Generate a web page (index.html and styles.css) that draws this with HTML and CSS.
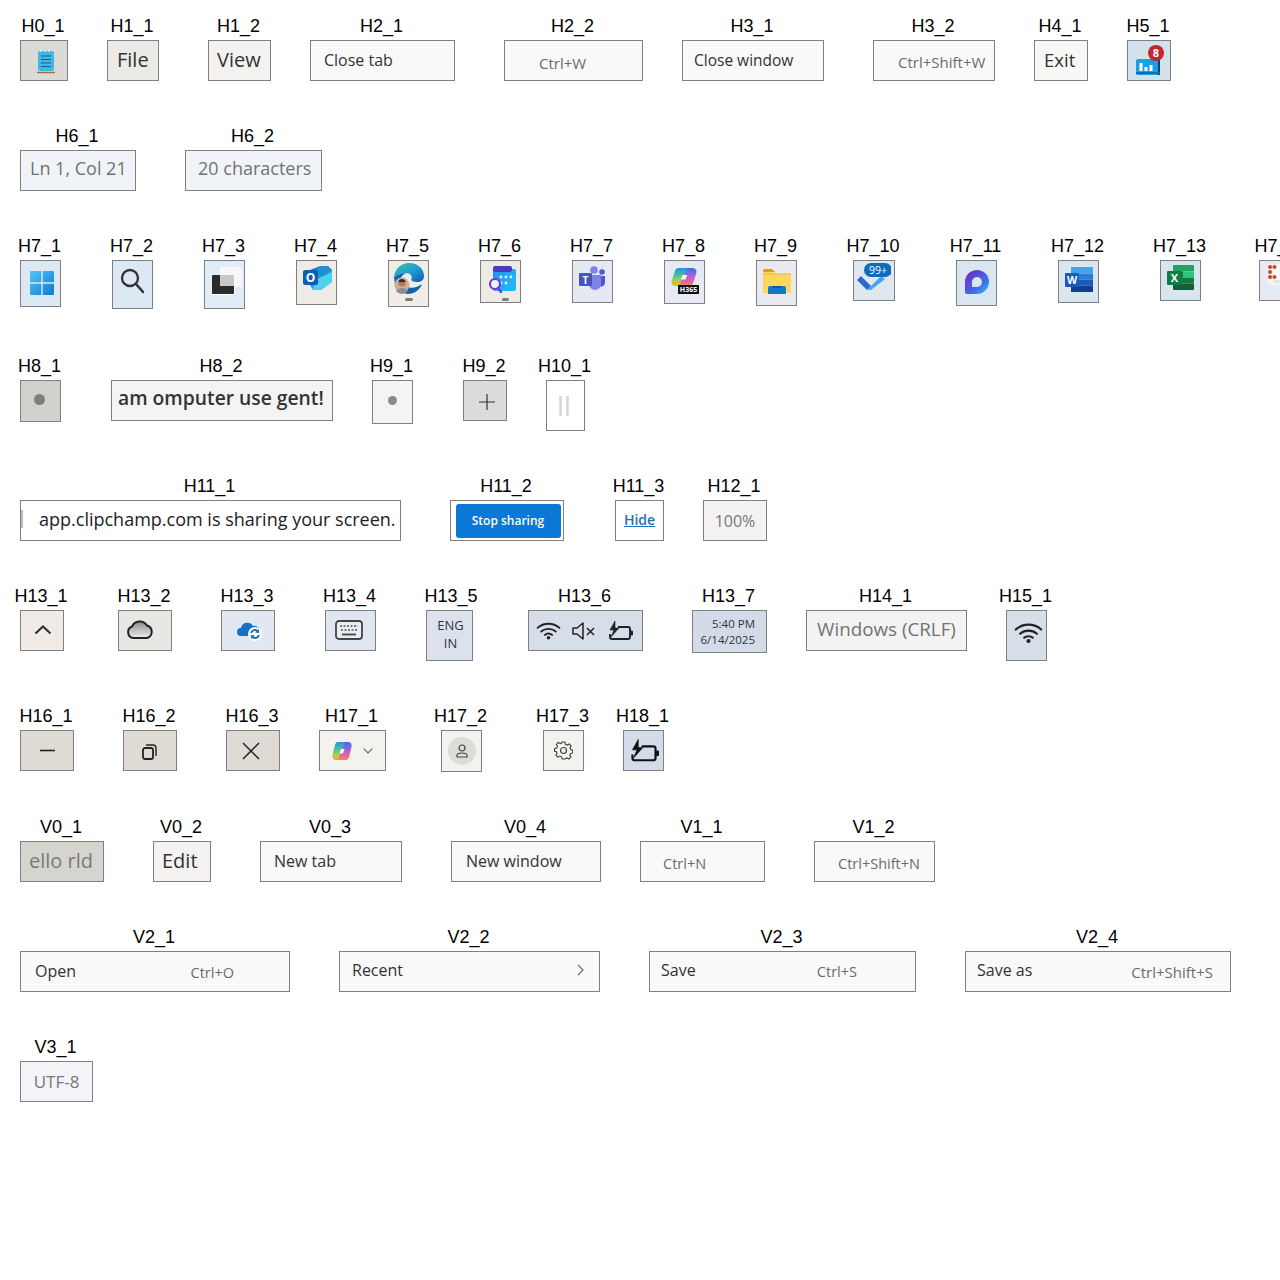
FILE: index.html
```html
<!DOCTYPE html>
<html lang="en">
<head>
<meta charset="utf-8">
<title>UI element crops</title>
<link rel="stylesheet" href="styles.css">
</head>
<body>
<svg class="defs" width="0" height="0" aria-hidden="true">
  <defs>
    <linearGradient id="gWin" x1="0" y1="0" x2="1" y2="1"><stop offset="0" stop-color="#52c8f6"/><stop offset="1" stop-color="#0a78d8"/></linearGradient>
    <linearGradient id="gOut" x1="0" y1="0" x2="1" y2="1"><stop offset="0" stop-color="#0f6cbd"/><stop offset="1" stop-color="#3fd0f0"/></linearGradient>
    <linearGradient id="gEdge" x1="0" y1="0" x2="1" y2="1"><stop offset="0" stop-color="#37c6a0"/><stop offset=".55" stop-color="#1d9ad6"/><stop offset="1" stop-color="#0c59a4"/></linearGradient>
    <linearGradient id="gCal" x1="0" y1="0" x2="1" y2="1"><stop offset="0" stop-color="#2b8cf0"/><stop offset="1" stop-color="#1cc0fa"/></linearGradient>
    <linearGradient id="gCopL" x1="0" y1="0" x2="0" y2="1"><stop offset="0" stop-color="#2d8fe0"/><stop offset=".4" stop-color="#48c0a0"/><stop offset=".7" stop-color="#a8d050"/><stop offset="1" stop-color="#f0b030"/></linearGradient>
    <linearGradient id="gCopR" x1="0" y1="0" x2="0" y2="1"><stop offset="0" stop-color="#3a6fe0"/><stop offset=".4" stop-color="#a060e0"/><stop offset=".75" stop-color="#f060a0"/><stop offset="1" stop-color="#f09040"/></linearGradient>
    <linearGradient id="gLoop" x1="0" y1="0" x2="1" y2="1"><stop offset="0" stop-color="#7a1fc4"/><stop offset=".65" stop-color="#3d6fe8"/><stop offset="1" stop-color="#36c8f0"/></linearGradient>
    <linearGradient id="gCloud" x1="0" y1="0" x2="0" y2="1"><stop offset="0" stop-color="#8a8a8a"/><stop offset="1" stop-color="#eeeeee"/></linearGradient>
    <symbol id="wifi" viewBox="0 0 24 18"><g fill="none" stroke="currentColor" stroke-width="1.800" stroke-linecap="round"><path d="M1.500 6.500C7.500 1.200 16.500 1.200 22.500 6.500"/><path d="M5 10C9 6.600 15 6.600 19 10"/><path d="M8.500 13.300c2-1.600 5-1.600 7 0"/></g><circle cx="12" cy="16" r="1.700" fill="currentColor"/></symbol>
    <symbol id="batt" viewBox="0 0 26 20"><path d="M11 6h10a2 2 0 0 1 2 2v8a2 2 0 0 1-2 2H5a2 2 0 0 1-2-2v-3" fill="none" stroke="currentColor" stroke-width="1.900" stroke-linejoin="round"/><rect x="23.500" y="9.500" width="2.500" height="5" rx="1" fill="currentColor"/><path d="M8 0 3 9h4l-3 7 8-9H8z" fill="currentColor" stroke="currentColor" stroke-width=".6"/></symbol>
    <symbol id="cop" viewBox="0 0 20 20" preserveAspectRatio="none"><path d="M6 1h7c1 0 1.500.5 1 1.500L8 19H4c-3 0-4-2.500-3.500-5L3 4C3.500 2 4.500 1 6 1z" fill="url(#gCopL)"/><path d="M14 19H7.500c-1 0-1.500-.5-1-1.500L13 1h3c3 0 4 2.500 3.500 5L17 16c-.5 2-1.500 3-3 3z" fill="url(#gCopR)"/><path d="M9 8h3.500L11 12.500H7.500z" fill="#fff"/></symbol>
  </defs>
</svg>

<div class="row">
  <div class="item h0-1"><div class="lbl">H0_1</div><div class="box">
    <svg class="ic" width="18" height="24" viewBox="0 0 18 24"><rect x="1" y="1" width="16" height="20" rx="2" fill="#3fb8e6"/><path d="M3 1h2M7 1h2M11 1h2" stroke="#fff" stroke-width="1"/><path d="M4 6h10M4 9.500h10M4 13h10M4 16.500h10" stroke="#14618f" stroke-width="1.100"/><path d="M0 22.500h18" stroke="#a56a38" stroke-width="1.500"/></svg>
  </div></div>
  <div class="item m39 h1-1"><div class="lbl">H1_1</div><div class="box t-big">File</div></div>
  <div class="item m49 h1-2"><div class="lbl">H1_2</div><div class="box t-big">View</div></div>
  <div class="item m39 h2-1"><div class="lbl">H2_1</div><div class="box t-menu">Close tab</div></div>
  <div class="item m49 h2-2"><div class="lbl">H2_2</div><div class="box t-key t-key-lg">Ctrl+W</div></div>
  <div class="item m39 h3-1"><div class="lbl">H3_1</div><div class="box t-menu">Close window</div></div>
  <div class="item m49 h3-2"><div class="lbl">H3_2</div><div class="box t-key t-key-lg">Ctrl+Shift+W</div></div>
  <div class="item m39 h4-1"><div class="lbl">H4_1</div><div class="box t-big">Exit</div></div>
  <div class="item m39 h5-1"><div class="lbl">H5_1</div><div class="box">
    <svg class="ic" width="34" height="32" viewBox="0 0 34 32"><rect x="4" y="15" width="24" height="16" rx="2" fill="#1a9fe2"/><rect x="26" y="15" width="2" height="16" fill="#0b3f78"/><path d="M9 19v8M14 23v4M19 21v6" stroke="#fff" stroke-width="3"/><path d="M4 29h24" stroke="#0d6db8" stroke-width="2"/><circle cx="24" cy="9" r="8" fill="#c4262e"/><text class="svgt bold" x="24" y="13" font-size="11" fill="#fff" text-anchor="middle">8</text></svg>
  </div></div>
</div>

<div class="row">
  <div class="item h6-1"><div class="lbl">H6_1</div><div class="box t-status">Ln 1, Col 21</div></div>
  <div class="item m49 h6-2"><div class="lbl">H6_2</div><div class="box t-status">20 characters</div></div>
</div>

<div class="row row-tall">
  <div class="item h7-1"><div class="lbl">H7_1</div><div class="box">
    <svg class="ic" width="24" height="24" viewBox="0 0 24 24"><path d="M0 1a1 1 0 0 1 1-1h10.300v11.300H0zM12.700 0H23a1 1 0 0 1 1 1v10.300H12.700zM0 12.700h11.300V24H1a1 1 0 0 1-1-1zM12.700 12.700H24V23a1 1 0 0 1-1 1H12.700z" fill="url(#gWin)"/></svg>
  </div></div>
  <div class="item m51 h7-2"><div class="lbl">H7_2</div><div class="box">
    <svg class="ic" width="24" height="26" viewBox="0 0 24 26"><circle cx="10" cy="10" r="8" fill="none" stroke="#333" stroke-width="2.300"/><path d="m16 16 7 8" stroke="#333" stroke-width="2.600" stroke-linecap="round"/></svg>
  </div></div>
  <div class="item m51 h7-3"><div class="lbl">H7_3</div><div class="box">
    <svg class="ic" width="32" height="30" viewBox="0 0 32 30"><rect x="9" y="1" width="22" height="20" rx="1" fill="#f6f8fb"/><rect x="1" y="9" width="23" height="20" rx="1" fill="#fff"/><rect x="1" y="9" width="22" height="19" rx="1" fill="#2b2b2b"/><rect x="9" y="9" width="14" height="11" fill="#c8c8c8"/></svg>
  </div></div>
  <div class="item m51 h7-4"><div class="lbl">H7_4</div><div class="box">
    <svg class="ic" width="30" height="26" viewBox="0 0 30 26"><path d="M7 5 17 1h8l4 4v12l-11 8H10l-3-5z" fill="url(#gOut)"/><path d="M17 1h8l4 4-9 7-8-5z" fill="#1f90d8"/><path d="M12 15 29 7v10l-11 8H10z" fill="#4fd2ee"/><rect x="0" y="5" width="15" height="15" rx="2" fill="#0a5fb4"/><text class="svgt bold" x="7.500" y="17" font-size="12" fill="#fff" text-anchor="middle">O</text></svg>
  </div></div>
  <div class="item m51 h7-5"><div class="lbl">H7_5</div><div class="box">
    <svg class="ic" width="32" height="40" viewBox="0 0 32 40"><path d="M1 15C2 6 9 1 16 1c9 0 15 6 15 13 0 4-3 6-7 6-3 0-5-1-6-2 2-3 0-7-5-7-6 0-10 3-12 4z" fill="url(#gEdge)"/><path d="M13 24c4 3 11 2 16-2-2 6-8 10-14 10-2 0-4-1-5-2z" fill="#0f66b0"/><path d="M1 15c2-1 6-4 12-4-4 2-6 5-6 8v4H2z" fill="#1266b0"/><circle cx="9" cy="23" r="7.500" fill="#c9b09c"/><circle cx="9" cy="21" r="3.600" fill="#b07a58"/><path d="M5.500 20c0-4 7-4 7 0" fill="#3a2a20"/><path d="M3 29c2-4 10-4 12 0a7.500 7.500 0 0 1-12 0z" fill="#8c8c90"/><rect x="12" y="36" width="8" height="3" rx="1.500" fill="#7d7d7d"/></svg>
  </div></div>
  <div class="item m51 h7-6"><div class="lbl">H7_6</div><div class="box">
    <svg class="ic" width="28" height="36" viewBox="0 0 28 36"><rect x="5" y="4" width="23" height="22" rx="2" fill="url(#gCal)"/><rect x="5" y="1" width="19" height="6" rx="2" fill="#4a3bb8"/><g fill="#dff3ff"><circle cx="13" cy="12" r="1.400"/><circle cx="18" cy="12" r="1.400"/><circle cx="23" cy="12" r="1.400"/><circle cx="13" cy="18" r="1.400"/><circle cx="18" cy="18" r="1.400"/></g><circle cx="7" cy="19" r="5" fill="#eaf4ff" stroke="#6d3cc8" stroke-width="2.200"/><path d="m10 23 3 4" stroke="#6d3cc8" stroke-width="2.400" stroke-linecap="round"/><rect x="14" y="33" width="7" height="3" rx="1.500" fill="#7d7d7d"/></svg>
  </div></div>
  <div class="item m51 h7-7"><div class="lbl">H7_7</div><div class="box">
    <svg class="ic" width="27" height="24" viewBox="0 0 27 24"><circle cx="15" cy="4" r="3.800" fill="#7b83eb"/><circle cx="23" cy="6" r="2.800" fill="#5059c9"/><path d="M19 10h7v7a4 4 0 0 1-6 3z" fill="#5059c9"/><path d="M8 9h14v9a6 6 0 0 1-12 0z" fill="#7b83eb"/><rect x="0" y="7" width="13" height="13" rx="1" fill="#4b53bc"/><text class="svgt bold" x="6.500" y="17.500" font-size="10" fill="#fff" text-anchor="middle">T</text></svg>
  </div></div>
  <div class="item m51 h7-8"><div class="lbl">H7_8</div><div class="box">
    <svg class="ic" width="28" height="27" viewBox="0 0 28 27"><use href="#cop" x="0" y="0" width="26" height="20"/><rect x="7" y="18" width="21" height="9" fill="#111"/><text class="svgt bold" x="17.500" y="25" font-size="7" fill="#fff" text-anchor="middle">H365</text></svg>
  </div></div>
  <div class="item m51 h7-9"><div class="lbl">H7_9</div><div class="box">
    <svg class="ic" width="28" height="25" viewBox="0 0 28 25"><path d="M0 2a2 2 0 0 1 2-2h7l3 3h-12z" fill="#d69f1e"/><path d="M1 3h10l2 2h14a1 1 0 0 1 1 1v18H0V4z" fill="#ffd65c"/><path d="M0 5h28" stroke="#e8b93c" stroke-width="1"/><path d="M5 25v-6a2 2 0 0 1 2-2h14a2 2 0 0 1 2 2v6z" fill="#0f78c8"/><path d="M10 18h8" stroke="#07457e" stroke-width="1.200"/></svg>
  </div></div>
  <div class="item m56 h7-10"><div class="lbl">H7_10</div><div class="box">
    <svg class="ic" width="38" height="32" viewBox="0 0 38 32"><path d="m4 18 10 10 4-4-10-10z" fill="#2a68d0"/><path d="M14 28 28 14l4 3-14 11z" fill="#46a4ee"/><rect x="11" y="1" width="28" height="14" rx="7" fill="#0f6cbd"/><text class="svgt" x="25" y="12" font-size="10.500" fill="#fff" text-anchor="middle">99+</text></svg>
  </div></div>
  <div class="item m61 h7-11"><div class="lbl">H7_11</div><div class="box">
    <svg class="ic" width="24" height="24" viewBox="0 0 24 24"><path fill-rule="evenodd" d="M12 0a12 12 0 0 1 0 24H2a2 2 0 0 1-2-2V12A12 12 0 0 1 12 0zm0 7a5 5 0 0 0-5 5v5h5a5 5 0 0 0 0-10z" fill="url(#gLoop)"/></svg>
  </div></div>
  <div class="item m61 h7-12"><div class="lbl">H7_12</div><div class="box">
    <svg class="ic" width="28" height="25" viewBox="0 0 28 25"><rect x="6" y="0" width="22" height="6.500" fill="#41a5ee"/><rect x="6" y="6.500" width="22" height="6" fill="#2b7cd3"/><rect x="6" y="12.500" width="22" height="6" fill="#185abd"/><rect x="6" y="18.500" width="22" height="6.500" fill="#103f91"/><rect x="0" y="6" width="14" height="14" rx="1" fill="#185abd"/><text class="svgt bold" x="7" y="17" font-size="10.500" fill="#fff" text-anchor="middle">W</text></svg>
  </div></div>
  <div class="item m61 h7-13"><div class="lbl">H7_13</div><div class="box">
    <svg class="ic" width="27" height="25" viewBox="0 0 27 25"><rect x="6" y="0" width="21" height="6.500" rx="1" fill="#21a366"/><rect x="6" y="6.500" width="21" height="6" fill="#33c481"/><rect x="6" y="6.500" width="10" height="6" fill="#107c41"/><rect x="6" y="12.500" width="21" height="6" fill="#107c41"/><rect x="6" y="18.500" width="21" height="6.500" rx="1" fill="#185c37"/><rect x="0" y="6" width="15" height="14" rx="1" fill="#107c41"/><text class="svgt bold" x="7.500" y="17" font-size="11" fill="#fff" text-anchor="middle">X</text></svg>
  </div></div>
  <div class="item m58 h7-14"><div class="lbl lbl-right">H7_14</div><div class="box">
    <svg class="ic" width="30" height="26" viewBox="0 0 30 26"><rect x="0" y="0" width="30" height="21" rx="3" fill="#f7f3f0"/><rect x="6" y="5" width="22" height="14" rx="2" fill="#e4e4e4"/><rect x="6" y="5" width="22" height="11" fill="#fafafa"/><g fill="#c8492a"><circle cx="3" cy="3" r="2"/><circle cx="7.500" cy="3" r="2"/><circle cx="3" cy="8" r="2"/><circle cx="3" cy="13" r="2"/><circle cx="7.500" cy="13" r="2"/></g></svg>
  </div></div>
</div>

<div class="row">
  <div class="item h8-1"><div class="lbl">H8_1</div><div class="box"><span class="dot dot-lg"></span></div></div>
  <div class="item m50 h8-2"><div class="lbl">H8_2</div><div class="box t-strong">am omputer use gent!</div></div>
  <div class="item m39 h9-1"><div class="lbl">H9_1</div><div class="box"><span class="dot"></span></div></div>
  <div class="item m50 h9-2"><div class="lbl">H9_2</div><div class="box">
    <svg class="ic" width="16" height="16" viewBox="0 0 16 16"><path d="M8 0v16M0 8h16" stroke="#333" stroke-width="1.200"/></svg>
  </div></div>
  <div class="item m39 h10-1"><div class="lbl">H10_1</div><div class="box">
    <svg class="ic" width="10" height="20" viewBox="0 0 10 20"><path d="M1.500 0v20M8.500 0v20" stroke="#d4d4d4" stroke-width="2.400"/></svg>
  </div></div>
</div>

<div class="row">
  <div class="item h11-1"><div class="lbl">H11_1</div><div class="box t-share"><span class="edge-mark"></span>app.clipchamp.com is sharing your screen.</div></div>
  <div class="item m49 h11-2"><div class="lbl">H11_2</div><div class="box"><span class="stop">Stop sharing</span></div></div>
  <div class="item m51 h11-3"><div class="lbl">H11_3</div><div class="box"><span class="hide">Hide</span></div></div>
  <div class="item m39 h12-1"><div class="lbl">H12_1</div><div class="box t-zoom">100%</div></div>
</div>

<div class="row">
  <div class="item h13-1"><div class="lbl">H13_1</div><div class="box">
    <svg class="ic" width="18" height="11" viewBox="0 0 18 11"><path d="m1.500 9.500 7.500-7 7.500 7" fill="none" stroke="#333" stroke-width="2.200"/></svg>
  </div></div>
  <div class="item m54 h13-2"><div class="lbl">H13_2</div><div class="box">
    <svg class="ic" width="28" height="20" viewBox="0 0 28 20"><path d="M7 19a6 6 0 0 1-1-11.500A8.500 8.500 0 0 1 21 6.500 6.500 6.500 0 0 1 21 19z" fill="url(#gCloud)" stroke="#222" stroke-width="2"/></svg>
  </div></div>
  <div class="item m49 h13-3"><div class="lbl">H13_3</div><div class="box">
    <svg class="ic" width="26" height="20" viewBox="0 0 26 20"><path d="M4 15a4 4 0 0 1 0-8 6.500 6.500 0 0 1 12-2 5 5 0 0 1 3 10z" fill="#1272c4"/><circle cx="18" cy="13" r="7" fill="#fff"/><g fill="none" stroke="#0f6cbd" stroke-width="1.800"><path d="M14 12a4 4 0 0 1 7-1.500"/><path d="M22 14a4 4 0 0 1-7 1.500"/></g><path d="m21.800 8 .2 4-4-.5zM14.200 18l-.2-4 4 .5z" fill="#0f6cbd"/></svg>
  </div></div>
  <div class="item m50 h13-4"><div class="lbl">H13_4</div><div class="box">
    <svg class="ic" width="28" height="20" viewBox="0 0 28 20"><rect x="1" y="1" width="26" height="18" rx="3" fill="#e8ecf3" stroke="#444" stroke-width="1.800"/><path d="M5 6h18M6 10h16" stroke="#555" stroke-width="1.600" stroke-dasharray="2 1.500"/><path d="M7 14.500h14" stroke="#444" stroke-width="1.800"/></svg>
  </div></div>
  <div class="item m50 h13-5"><div class="lbl lbl-right">H13_5</div><div class="box t-lang">ENG<br>IN</div></div>
  <div class="item m55 h13-6"><div class="lbl">H13_6</div><div class="box tray">
    <svg class="wifi-s" width="25" height="19"><use href="#wifi"/></svg>
    <svg class="mute" width="24" height="18" viewBox="0 0 24 18"><path d="M1 6h4l6-5v16l-6-5H1z" fill="none" stroke="#222" stroke-width="1.500" stroke-linejoin="round"/><path d="m15 6 7 7m0-7-7 7" stroke="#222" stroke-width="1.500"/></svg>
    <svg class="batt-s" width="26" height="20"><use href="#batt"/></svg>
  </div></div>
  <div class="item m49 h13-7"><div class="lbl">H13_7</div><div class="box t-clock"><span>5:40 PM</span><span>6/14/2025</span></div></div>
  <div class="item m39 h14-1"><div class="lbl">H14_1</div><div class="box t-status t-eol">Windows (CRLF)</div></div>
  <div class="item m39 h15-1"><div class="lbl">H15_1</div><div class="box">
    <svg class="wifi-l" width="29" height="23"><use href="#wifi"/></svg>
  </div></div>
</div>

<div class="row">
  <div class="item h16-1"><div class="lbl">H16_1</div><div class="box">
    <svg class="ic" width="15" height="3" viewBox="0 0 15 3"><path d="M0 1.500h15" stroke="#222" stroke-width="1.600"/></svg>
  </div></div>
  <div class="item m49 h16-2"><div class="lbl">H16_2</div><div class="box">
    <svg class="ic" width="15" height="16" viewBox="0 0 15 16"><rect x="1" y="4" width="10" height="11" rx="2" fill="none" stroke="#222" stroke-width="1.800"/><path d="M4 1h7a3 3 0 0 1 3 3v8" fill="none" stroke="#222" stroke-width="1.400"/></svg>
  </div></div>
  <div class="item m49 h16-3"><div class="lbl">H16_3</div><div class="box">
    <svg class="ic" width="18" height="18" viewBox="0 0 18 18"><path d="m1 1 16 16m0-16L1 17" stroke="#222" stroke-width="1.500"/></svg>
  </div></div>
  <div class="item m39 h17-1"><div class="lbl">H17_1</div><div class="box copilot">
    <svg width="20" height="20"><use href="#cop"/></svg>
    <svg width="10" height="6" viewBox="0 0 10 6"><path d="m.7.700 4.300 4.300 4.300-4.300" fill="none" stroke="#666" stroke-width="1.100"/></svg>
  </div></div>
  <div class="item m55 h17-2"><div class="lbl">H17_2</div><div class="box">
    <span class="avatar"><svg width="12" height="14" viewBox="0 0 12 14"><circle cx="6" cy="4" r="3" fill="none" stroke="#444" stroke-width="1.200"/><path d="M1 13v-1.500C1 9.500 3 9 6 9s5 .5 5 2.500V13z" fill="none" stroke="#444" stroke-width="1.200"/></svg></span>
  </div></div>
  <div class="item m61 h17-3"><div class="lbl">H17_3</div><div class="box">
    <svg class="ic" width="19" height="19" viewBox="0 0 19 19"><path d="M8 1h3l.6 2.400 1.800.8 2.200-1.200 2 2.100-1.200 2.100.8 1.800 2.100.6v3l-2.300.6-.8 1.800 1.200 2.100-2.100 2-2.100-1.200-1.800.8L11 19H8l-.6-2.300-1.800-.8-2.100 1.200-2.100-2.100 1.200-2.100-.8-1.800L0 11V8l2.300-.6.8-1.800L1.900 3.500 4 1.400l2.100 1.200 1.800-.8z" transform="scale(.94) translate(.6 .1)" fill="none" stroke="#444" stroke-width="1.200"/><circle cx="9.500" cy="9.500" r="3" fill="none" stroke="#444" stroke-width="1.200"/></svg>
  </div></div>
  <div class="item m39 h18-1"><div class="lbl">H18_1</div><div class="box">
    <svg class="batt-l" width="30" height="26"><use href="#batt"/></svg>
  </div></div>
</div>

<div class="row">
  <div class="item v0-1"><div class="lbl">V0_1</div><div class="box t-big t-muted">ello rld</div></div>
  <div class="item m49 v0-2"><div class="lbl">V0_2</div><div class="box t-big">Edit</div></div>
  <div class="item m49 v0-3"><div class="lbl">V0_3</div><div class="box t-menu">New tab</div></div>
  <div class="item m49 v0-4"><div class="lbl">V0_4</div><div class="box t-menu">New window</div></div>
  <div class="item m39 v1-1"><div class="lbl">V1_1</div><div class="box t-key">Ctrl+N</div></div>
  <div class="item m49 v1-2"><div class="lbl">V1_2</div><div class="box t-key">Ctrl+Shift+N</div></div>
</div>

<div class="row">
  <div class="item v2-1"><div class="lbl">V2_1</div><div class="box menu-row"><span class="t-menu">Open</span><span class="t-key key-low">Ctrl+O</span></div></div>
  <div class="item m49 v2-2"><div class="lbl">V2_2</div><div class="box menu-row"><span class="t-menu">Recent</span><svg width="7" height="12" viewBox="0 0 7 12"><path d="m1 1 5 5-5 5" fill="none" stroke="#666" stroke-width="1.100"/></svg></div></div>
  <div class="item m49 v2-3"><div class="lbl">V2_3</div><div class="box menu-row"><span class="t-menu">Save</span><span class="t-key key-low">Ctrl+S</span></div></div>
  <div class="item m49 v2-4"><div class="lbl">V2_4</div><div class="box menu-row"><span class="t-menu">Save as</span><span class="t-key t-key-lg key-low">Ctrl+Shift+S</span></div></div>
</div>

<div class="row">
  <div class="item v3-1"><div class="lbl">V3_1</div><div class="box t-utf">UTF-8</div></div>
</div>
</body>
</html>
```
FILE: styles.css
```css
html, body { margin: 0; background: #fff; }
body {
  padding: 16px 0 0 20px;
  height: 1264px;
  box-sizing: content-box;
  overflow: hidden;
  display: flex;
  flex-direction: column;
  gap: 45px;
  font-family: "Open Sans", "Noto Sans", sans-serif;
}
.defs { position: absolute; }
.row { display: flex; align-items: flex-start; flex: none; }
.row-tall { min-height: 75px; }
.item { flex: none; display: flex; flex-direction: column; align-items: center; }
.lbl {
  font: 18px/20px "Liberation Sans", Arial, sans-serif;
  color: #000;
  white-space: nowrap;
  margin: 0 2px 4px 0;
}
.lbl-right { margin: 0 0 4px 3px; }
.box {
  box-sizing: border-box;
  width: 100%;
  height: var(--h, 41px);
  border: 1px solid #808080;
  background: var(--bg, #f9f9f9);
  padding: var(--pad, 0);
  display: flex;
  align-items: center;
  justify-content: var(--just, center);
  white-space: nowrap;
}
.ic { display: block; flex: none; }
.svgt { font-family: "Open Sans", sans-serif; }
.bold { font-weight: 700; }

.m39 { margin-left: 39px; } .m49 { margin-left: 49px; } .m50 { margin-left: 50px; }
.m51 { margin-left: 51px; } .m54 { margin-left: 54px; } .m55 { margin-left: 55px; }
.m56 { margin-left: 56px; } .m58 { margin-left: 58px; } .m61 { margin-left: 61px; }

.t-big { font-size: 20px; color: #333; --just: flex-start; }
.t-menu { font-size: 16px; color: #333; --just: flex-start; }
.t-key { font-size: 14.500px; color: #6b6b6b; --just: flex-start; }
.t-key-lg { font-size: 15px; }
.t-status { font-size: 18px; color: #727272; --just: flex-start; }
.t-muted { color: #7b7b77; }
.t-strong { font-size: 19.300px; font-weight: 600; color: #333; --just: flex-start; }
.t-share { font-size: 18px; color: #222; --just: flex-start; position: relative; }
.t-zoom { font-size: 16px; color: #777; }
.t-utf { font-size: 17px; color: #777; }
.t-lang { display: block; font-size: 13px; line-height: 18px; font-weight: 500; color: #333; text-align: center; padding: 5px 0 0 2px; }
.t-clock { display: flex; flex-direction: column; align-items: flex-end; justify-content: center; font-size: 11.500px; line-height: 16px; color: #333; padding: 1px 11px 0 0; }
.t-eol { --just: center; }
.menu-row { justify-content: space-between; }
.key-low { padding-top: 4px; }

.dot { width: 9px; height: 9px; border-radius: 50%; background: #8a8a8a; }
.dot-lg { width: 11px; height: 11px; background: #7e7e7c; }
.edge-mark { position: absolute; left: 0; top: 9px; width: 2px; height: 18px; background: #bbb; }
.stop { display: flex; align-items: center; justify-content: center; width: 105px; height: 34px; margin-left: 2px; border-radius: 3px; background: #0a78d4; color: #fff; font-size: 12px; font-weight: 600; }
.hide { font-size: 14px; font-weight: 600; color: #1a73b5; text-decoration: underline; padding-bottom: 2px; }
.avatar { width: 28px; height: 28px; border-radius: 50%; background: #dedcda; display: flex; align-items: center; justify-content: center; }
.tray { color: #222; --just: flex-start; }
.tray svg { flex: none; }
.wifi-s { margin: 0 11px 0 7px; }
.mute { margin-right: 11px; }
.wifi-l { color: #222; }
.batt-l { color: #111; }
.copilot { gap: 11px; }

/* row H0-H5 */
.h0-1 { width: 48px; --bg: #dcdad5; --pad: 2px 0 0 3px; }
.h1-1 { width: 52px; --bg: #eceae7; --pad: 0 0 3px 9px; }
.h1-2 { width: 63px; --bg: #f3f2f0; --pad: 0 0 3px 8px; }
.h2-1 { width: 145px; --pad: 0 0 2px 13px; }
.h2-2 { width: 139px; --pad: 5px 0 0 34px; }
.h3-1 { width: 142px; --pad: 0 0 1px 11px; }
.h3-1 .box { font-size: 15.500px; }
.h3-2 { width: 122px; --pad: 3px 0 0 24px; }
.h4-1 { width: 54px; --bg: #f8f8f7; --pad: 0 0 2px 9px; }
.h4-1 .box { font-size: 18.500px; }
.h5-1 { width: 44px; --bg: #d3e1ec; --pad: 0 0 1px 0; }

/* row H6 */
.h6-1 { width: 116px; --bg: #f0f4f8; --pad: 0 0 5px 9px; }
.h6-2 { width: 137px; --bg: #f0f4f8; --pad: 0 0 5px 12px; }

/* row H7 */
.h7-1 { width: 41px; --h: 47px; --bg: #dce9f4; --pad: 0 0 1px 2px; }
.h7-2 { width: 41px; --h: 49px; --bg: #dce9f4; --pad: 0 2px 8px 0; }
.h7-3 { width: 41px; --h: 49px; --bg: #e0ecf7; --pad: 0 0 8px 4px; }
.h7-4 { width: 41px; --h: 45px; --bg: #efece7; --pad: 0 0 10px 3px; }
.h7-5 { width: 41px; --h: 47px; --bg: #f0ece6; --pad: 0 0 3px 0; }
.h7-6 { width: 41px; --h: 43px; --bg: #eeebe6; --pad: 2px 0 0 3px; }
.h7-7 { width: 41px; --h: 43px; --bg: #e5e9f4; --pad: 0 0 7px 0; }
.h7-8 { width: 41px; --h: 44px; --bg: #e7eaf4; --pad: 0 0 4px 0; }
.h7-9 { width: 41px; --h: 46px; --bg: #e8eaf0; --pad: 0 0 4px 0; }
.h7-10 { width: 42px; --h: 41px; --bg: #dfe7ef; --pad: 0 3px 6px 0; --just: flex-end; }
.h7-11 { width: 41px; --h: 46px; --bg: #d9e5ef; --pad: 0 0 3px 1px; }
.h7-12 { width: 41px; --h: 43px; --bg: #d9e6f0; --pad: 0 0 5px 1px; }
.h7-13 { width: 41px; --h: 41px; --bg: #d9e5ee; --pad: 0 0 7px 0; }
.h7-14 { width: 41px; --h: 41px; --bg: #e4ebf2; --pad: 0 0 8px 7px; --just: flex-start; }

/* row H8-H10 */
.h8-1 { width: 41px; --h: 42px; --bg: #d2d1cd; --pad: 0 3px 4px 0; }
.h8-2 { width: 222px; --bg: #f4f4f4; --pad: 0 0 7px 6px; }
.h9-1 { width: 41px; --h: 44px; --bg: #f4f4f4; --pad: 0 0 4px 0; }
.h9-2 { width: 44px; --bg: #dbdbde; --pad: 2px 0 0 3px; }
.h10-1 { width: 39px; --h: 51px; --bg: #fff; --pad: 0 3px 0 0; }

/* row H11-H12 */
.h11-1 { width: 381px; --bg: #fff; --pad: 0 0 3px 18px; }
.h11-2 { width: 114px; --bg: #fff; }
.h11-3 { width: 49px; --bg: #fff; }
.h12-1 { width: 64px; --bg: #f3f3f3; }

/* row H13-H15 */
.h13-1 { width: 44px; --bg: #f0ebe5; --pad: 0 0 2px 2px; }
.h13-2 { width: 54px; --bg: #e9e7e4; --pad: 0 10px 4px 0; }
.h13-3 { width: 54px; --bg: #e2e8f2; --pad: 0 0 0 3px; }
.h13-4 { width: 51px; --bg: #e0e6f0; --pad: 0 4px 2px 0; }
.h13-5 { width: 47px; --h: 51px; --bg: #dbe2ee; }
.h13-6 { width: 115px; --bg: #d6deea; }
.h13-7 { width: 75px; --h: 43px; --bg: #d4dbe8; }
.h14-1 { width: 161px; --bg: #f3f3f3; --pad: 0 0 3px 0; }
.h14-1 .box { font-size: 18.800px; }
.h15-1 { width: 41px; --h: 51px; --bg: #d6deea; --pad: 0 0 6px 3px; }

/* row H16-H18 */
.h16-1, .h16-2, .h16-3 { width: 54px; --bg: #dfdbd4; }
.h16-2 { --pad: 2px 2px 0 0; }
.h16-3 { --pad: 0 5px 0 0; }
.h17-1 { width: 67px; --bg: #f4f2ef; }
.h17-2 { width: 41px; --h: 42px; --bg: #f4f2ef; --pad: 0 0 1px 0; }
.h17-3 { width: 41px; --bg: #f4f2ef; }
.h18-1 { width: 41px; --bg: #d3dce8; --pad: 0 0 0 1px; }

/* row V0-V1 */
.v0-1 { width: 84px; --bg: #d5d4ce; --pad: 0 0 2px 8px; }
.v0-2 { width: 58px; --bg: #f3f2f0; --pad: 0 0 2px 8px; }
.v0-3 { width: 142px; --pad: 0 0 1px 13px; }
.v0-4 { width: 150px; --pad: 0 0 1px 14px; }
.v1-1 { width: 125px; --pad: 4px 0 0 22px; }
.v1-2 { width: 121px; --pad: 3px 0 0 23px; }

/* row V2 */
.v2-1 { width: 270px; --pad: 0 55px 2px 14px; }
.v2-2 { width: 261px; --pad: 0 15px 4px 12px; }
.v2-3 { width: 267px; --pad: 0 58px 4px 11px; }
.v2-4 { width: 266px; --pad: 0 17px 3px 11px; }

/* row V3 */
.v3-1 { width: 73px; --bg: #f3f4f8; }
```
